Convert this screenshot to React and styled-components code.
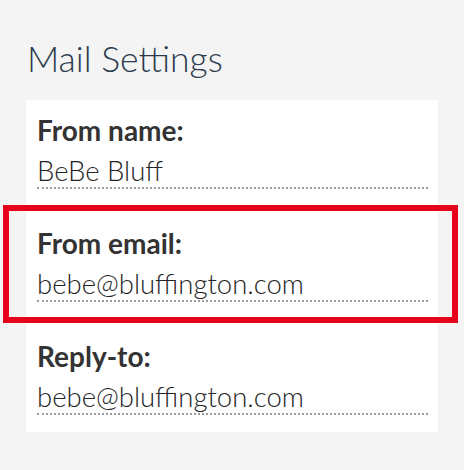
import React from "react";
import styled, { createGlobalStyle } from "styled-components";

const Global = createGlobalStyle`
  html, body { margin: 0; padding: 0; background: #f4f4f4; }
  body { font-family: Lato, "Open Sans", sans-serif; }
`;

const Page = styled.div`
  padding: 37px 26px 0 26px;
  width: 412px;
`;

const Title = styled.h1`
  margin: 0 0 19px 1px;
  font-size: 35.5px;
  line-height: 44px;
  font-weight: 300;
  color: #2a3b4c;
`;

const Card = styled.div`
  background: #ffffff;
  display: flex;
  flex-direction: column;
`;

const Field = styled.div`
  position: relative;
  padding: 14px 10px 24px 11px;
  display: flex;
  flex-direction: column;
  &:last-child { padding-bottom: 17px; }
`;

const Highlight = styled.div`
  position: absolute;
  top: -8px;
  bottom: 3px;
  left: -23px;
  right: -20px;
  border: 6px solid #e8001c;
  pointer-events: none;
`;

const Label = styled.div`
  font-size: 28px;
  line-height: 32px;
  font-weight: 700;
  color: #333333;
`;

const Value = styled.div`
  margin-top: 9px;
  font-size: 27.5px;
  line-height: 32px;
  font-weight: 300;
  color: #242424;
  border-bottom: 2px dotted #9a9a9a;
`;

const fields = [
  { label: "From name:", value: "BeBe Bluff" },
  { label: "From email:", value: "bebe@bluffington.com", highlighted: true },
  { label: "Reply-to:", value: "bebe@bluffington.com" },
];

export default function App() {
  return (
    <>
      <Global />
      <Page>
        <Title>Mail Settings</Title>
        <Card>
          {fields.map((f) => (
            <Field key={f.label}>
              {f.highlighted && <Highlight />}
              <Label>{f.label}</Label>
              <Value>{f.value}</Value>
            </Field>
          ))}
        </Card>
      </Page>
    </>
  );
}
